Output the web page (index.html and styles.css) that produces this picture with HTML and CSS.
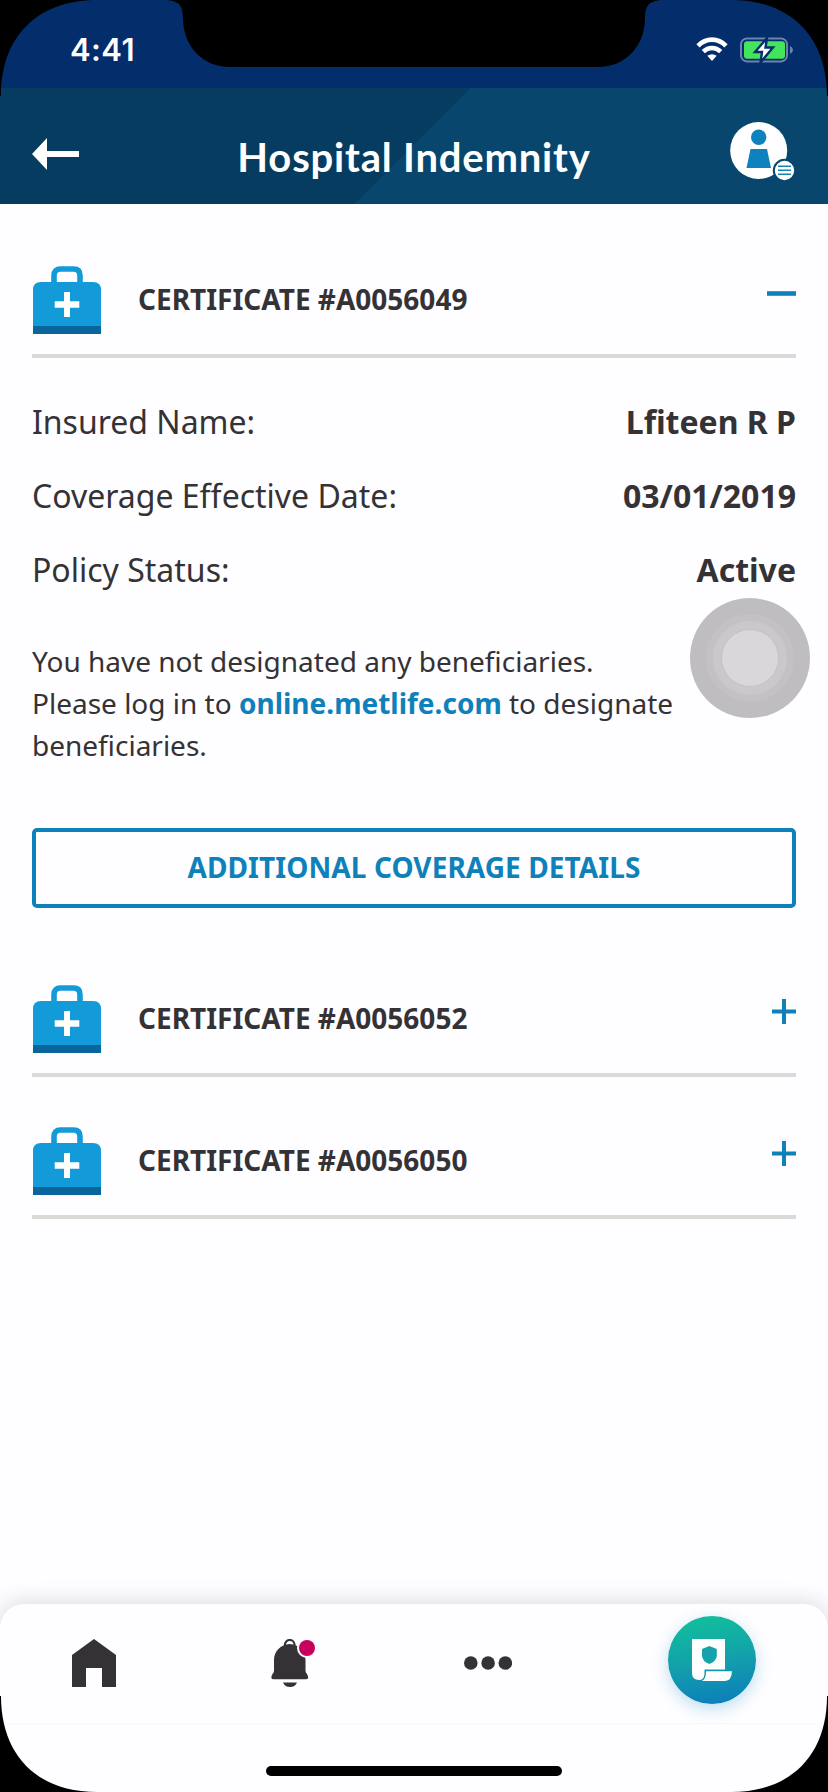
FILE: index.html
```html
<!DOCTYPE html>
<html lang="en">
<head>
<meta charset="utf-8">
<title>Hospital Indemnity</title>
<link rel="stylesheet" href="styles.css">
</head>
<body>
<svg class="defs" width="0" height="0" aria-hidden="true">
  <symbol id="medkit" viewBox="0 0 70 68">
    <path d="M22 18V9.500Q22 3 28.500 3H41.500Q48 3 48 9.500V18" fill="none" stroke="#139ad9" stroke-width="5.600"/>
    <path d="M1 60V24Q1 16 9 16H61Q69 16 69 24V60Z" fill="#139ad9"/>
    <path d="M1 60H69V68H1Z" fill="#0a659d"/>
    <path d="M32 26H38V35.300H47.300V41.700H38V51H32V41.700H22.700V35.300H32Z" fill="#fff"/>
  </symbol>
  <symbol id="plus" viewBox="0 0 24 25">
    <path d="M12 0V25M0 12.500H24" stroke="#0f81ba" stroke-width="4"/>
  </symbol>
</svg>
<div class="screen">
  <div class="status">
    <span class="time">4:41</span>
    <div class="indicators">
      <svg width="32" height="24" viewBox="0 0 32 24">
        <g fill="none" stroke="#fff" stroke-width="4.600">
          <path d="M2 8.800Q8 2.600 16 2.600T30 8.800"/>
          <path d="M7.300 14.600Q11 11 16 11T24.700 14.600"/>
        </g>
        <path d="M11.300 18.800Q16 15.600 20.700 18.800L16 24Z" fill="#fff"/>
      </svg>
      <svg width="54" height="26" viewBox="0 0 54 26">
        <rect x="1" y="1.400" width="46" height="23" rx="6" fill="none" stroke="#6d83ae" stroke-width="2"/>
        <path d="M50 9Q53 10.500 53 13T50 17Z" fill="#6d83ae"/>
        <rect x="4" y="4.200" width="41" height="17.600" rx="3" fill="#43e65b"/>
        <path d="M27 1L15 15H22L20.500 25.500L33 10.500H25.500Z" fill="#fff" stroke="#042d6c" stroke-width="2.400"/>
      </svg>
    </div>
  </div>
  <header class="header">
    <svg class="back" width="47" height="32" viewBox="0 0 47 32"><path d="M0 16L15 0V13H47V19H15V32Z" fill="#fff"/></svg>
    <h1 class="title">Hospital Indemnity</h1>
    <svg class="profile" width="66" height="60" viewBox="0 0 66 60">
      <circle cx="28.700" cy="28.500" r="28.500" fill="#fff"/>
      <circle cx="28.700" cy="15.300" r="7.700" fill="#0d82be"/>
      <path d="M20.500 27H37L41 46H16.500Z" fill="#0d82be"/>
      <circle cx="54.500" cy="48.500" r="10.700" fill="#fff" stroke="#08466e" stroke-width="2"/>
      <path d="M48 44.300H61M48 48.300H61M48 52.300H61" stroke="#1684ae" stroke-width="1.500"/>
    </svg>
  </header>
  <main class="content">
    <section>
      <div class="cert">
        <svg class="kit"><use href="#medkit"/></svg>
        <h2 class="cert-name">CERTIFICATE #A0056049</h2>
        <svg class="minus" viewBox="0 0 29 25"><path d="M0 12.500H29" stroke="#0f81ba" stroke-width="4.600"/></svg>
      </div>
      <dl class="facts">
        <div class="fact"><dt>Insured Name:</dt><dd>Lfiteen R P</dd></div>
        <div class="fact"><dt>Coverage Effective Date:</dt><dd>03/01/2019</dd></div>
        <div class="fact"><dt>Policy Status:</dt><dd>Active</dd></div>
      </dl>
      <p class="note">You have not designated any beneficiaries.<br>Please log in to <a class="link">online.metlife.com</a> to designate<br>beneficiaries.</p>
      <button class="details">ADDITIONAL COVERAGE DETAILS</button>
    </section>
    <section class="collapsed">
      <div class="cert">
        <svg class="kit"><use href="#medkit"/></svg>
        <h2 class="cert-name">CERTIFICATE #A0056052</h2>
        <svg class="plus"><use href="#plus"/></svg>
      </div>
      <div class="cert">
        <svg class="kit"><use href="#medkit"/></svg>
        <h2 class="cert-name">CERTIFICATE #A0056050</h2>
        <svg class="plus"><use href="#plus"/></svg>
      </div>
    </section>
  </main>
  <nav class="tabs">
    <div class="tab-row">
      <svg width="44" height="48" viewBox="0 0 44 48"><path d="M22 0L44 16V48H30V29H14V48H0V16Z" fill="#343235"/></svg>
      <svg width="44" height="48" viewBox="0 0 44 48">
        <circle cx="18.700" cy="5.800" r="4.800" fill="none" stroke="#343235" stroke-width="2.200"/>
        <path d="M18.700 5C9.500 5.500 3 12.500 3 21V31.500Q3 33.500 1.500 35Q-1.500 40.300 3 40.300H34.500Q39 40.300 36 35Q34.500 33.500 34.500 31.500V21C34.500 12.500 28 5.500 18.700 5Z" fill="#343235"/>
        <path d="M15.500 5Q18.700 2.200 21.900 5Z" fill="#fff"/>
        <path d="M12 43.500H26Q24 48 19 48T12 43.500Z" fill="#343235"/>
        <circle cx="36" cy="9" r="10" fill="#fefdff"/><circle cx="36" cy="9" r="8" fill="#c7005c"/>
      </svg>
      <svg width="48" height="14" viewBox="0 0 48 14" fill="#343235"><circle cx="6.800" cy="7" r="6.800"/><circle cx="24.100" cy="7" r="6.800"/><circle cx="41.300" cy="7" r="6.800"/></svg>
      <div class="policy">
        <svg width="40" height="42" viewBox="0 0 40 42">
          <path d="M0 0H33V30.500H12.500V35Q12 41 7 41Q0 41 0 34Z" fill="#fff"/>
          <path d="M17.300 7L24.800 10V17Q24.500 22 17.300 25Q10.300 22 10 17V10Z" fill="#14a3aa"/>
          <path d="M14 32.300H40Q39.500 42 33 42H10Q14 39 14 34Z" fill="#fff"/>
        </svg>
      </div>
    </div>
    <div class="home-area"><div class="home-bar"></div></div>
  </nav>
  <div class="touch"><div class="ring"><div class="ring-mid"><div class="ring-core"></div></div></div></div>
  <svg class="frame" viewBox="0 0 828 1792">
    <path d="M0 0H97C37 0 1 37 1 96H0ZM828 0H731C791 0 827 37 827 96H828ZM0 1792H97C37 1792 1 1755 1 1696H0ZM828 1792H731C791 1792 827 1755 827 1696H828Z"/>
    <path d="M97 0H167C179 1.500 183 5 183 19C183.500 46 202 66 228 67H600C626 66 644.500 46 645 19C645 5 649 1.500 661 0Z"/>
  </svg>
</div>
</body>
</html>
```

FILE: styles.css
```css
* { box-sizing: border-box; }
body { margin: 0; background: #000; }
svg { display: block; flex: none; }
.defs { position: absolute; }
.screen {
  position: relative;
  display: flex;
  flex-direction: column;
  width: 828px;
  height: 1792px;
  overflow: hidden;
  background: #fefdff;
  color: #343235;
  font-family: "Noto Sans", sans-serif;
}
.status {
  display: flex;
  justify-content: space-between;
  height: 88px;
  padding: 31px 34px 0 70px;
  background: #042d6c;
}
.time {
  color: #fff;
  font: 600 31px/38px Inter, sans-serif;
  letter-spacing: .4px;
}
.indicators { display: flex; gap: 12px; padding-top: 6px; }
.header {
  display: flex;
  justify-content: space-between;
  height: 116px;
  padding: 0 32px;
  background: linear-gradient(135deg, #053c60 0 333px, #08466e 333px);
}
.back { margin-top: 50px; }
.title {
  margin: 0;
  padding: 43px 0 0 19px;
  color: #fff;
  font: 700 40px/52px Lato, sans-serif;
  letter-spacing: .8px;
  white-space: nowrap;
}
.profile { margin-top: 34px; }
.content {
  flex: 1;
  padding: 12px 32px 0;
}
.cert {
  display: flex;
  align-items: flex-start;
  height: 142px;
  padding-top: 50px;
  border-bottom: 4px solid #dbdad9;
}
.kit { width: 70px; height: 68px; }
.cert-name {
  flex: 1;
  margin: 0 0 0 36px;
  font-size: 28px;
  font-weight: 700;
  line-height: 66px;
}
.minus { width: 29px; height: 25px; margin-top: 15px; }
.plus { width: 24px; height: 25px; margin-top: 14px; }
.facts { margin: 27px 0 33px; }
.fact {
  display: flex;
  justify-content: space-between;
  font-size: 32px;
  line-height: 74px;
}
.fact dd { margin: 0; font-weight: 700; }
.note { margin: 0 0 62px; font-size: 28px; line-height: 42px; }
.link { color: #0f81ba; font-weight: 700; }
.details {
  display: block;
  width: 100%;
  height: 80px;
  padding: 0 0 2px;
  border: 4px solid #0f81ba;
  border-radius: 5px;
  background: none;
  color: #0f81ba;
  font: 700 28px/70px "Noto Sans", sans-serif;
  letter-spacing: .08px;
}
.collapsed { margin-top: 27px; }
.tabs {
  height: 188px;
  border-radius: 24px 24px 0 0;
  background: #fefdff;
  box-shadow: 0 0 24px rgba(40, 35, 45, .19);
}
.tab-row {
  display: grid;
  grid-template-columns: 199px 193px 204px 88px;
  align-items: center;
  height: 120px;
  padding: 0 0 2px 72px;
  border-bottom: 1px solid #f9f8fb;
}
.policy {
  display: flex;
  align-items: center;
  justify-content: center;
  width: 88px;
  height: 88px;
  margin-top: -5px;
  border-radius: 50%;
  background: linear-gradient(170deg, #11bf9b 5%, #13a2aa 48%, #0d7dbb 95%);
  box-shadow: 0 5px 16px rgba(13, 140, 200, .27);
}
.home-area { padding-top: 42px; }
.home-bar {
  width: 296px;
  height: 10px;
  margin: 0 auto;
  border-radius: 5px;
  background: #000;
}
/* Floating assistive-touch button */
.touch, .ring, .ring-mid {
  display: flex;
  align-items: center;
  justify-content: center;
  border-radius: 50%;
}
.touch {
  position: absolute;
  left: 690px;
  top: 598px;
  width: 120px;
  height: 120px;
  background: #bfbdc0;
}
.ring { width: 88px; height: 88px; background: #c3c1c4; }
.ring-mid { width: 74px; height: 74px; background: #cac8cb; }
.ring-core {
  width: 58px;
  height: 58px;
  border: 1px solid #c5c3c6;
  border-radius: 50%;
  background: #d9d7da;
}
/* Rounded device corners and notch */
.frame {
  position: absolute;
  inset: 0;
  width: 828px;
  height: 1792px;
  pointer-events: none;
}
```
